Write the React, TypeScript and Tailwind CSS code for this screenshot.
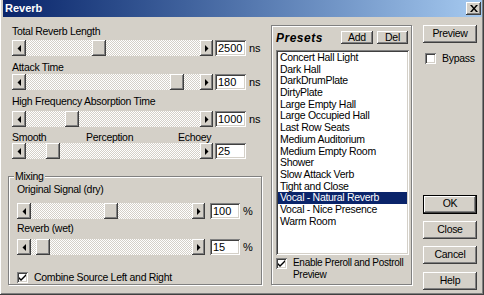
import React from 'react';

const raised =
  'bg-[#d4d0c8] shadow-[inset_-1px_-1px_#404040,inset_1px_1px_#ffffff,inset_-2px_-2px_#808080,inset_2px_2px_#d4d0c8]';
const sunken =
  'bg-white shadow-[inset_1px_1px_#808080,inset_-1px_-1px_#ffffff,inset_2px_2px_#404040,inset_-2px_-2px_#d4d0c8]';
const dither =
  'bg-[repeating-conic-gradient(#ffffff_0_25%,#d4d0c8_0_50%)] bg-[length:2px_2px]';
const plain = 'text-[11px] tracking-normal';

const Arrow = ({ dir }: { dir: 'left' | 'right' }) => (
  <svg width="4" height="7" viewBox="0 0 4 7">
    {dir === 'left' ? <path d="M4 0V7L0.5 3.5Z" fill="#000" /> : <path d="M0 0V7L3.5 3.5Z" fill="#000" />}
  </svg>
);

interface SliderProps {
  track: number;
  thumb: number;
  value: string;
  unit: string;
  gap: string;
  editW: string;
}

const Slider: React.FC<SliderProps> = ({ track, thumb, value, unit, gap, editW }) => (
  <div className="flex items-center h-[16px]">
    <div className={`${raised} w-[14px] h-[16px] flex items-center justify-center`}>
      <Arrow dir="left" />
    </div>
    <div className={`${dither} h-[16px] flex items-center`} style={{ width: track }}>
      <div className={`${raised} w-[14px] h-[16px]`} style={{ marginLeft: thumb }} />
    </div>
    <div className={`${raised} w-[13px] h-[16px] flex items-center justify-center`}>
      <Arrow dir="right" />
    </div>
    <div className={`${sunken} ${gap} ${editW} ${plain} h-[16px] flex items-center pl-[3px] text-black`}>
      {value}
    </div>
    <span className={`${plain} ml-[3px] text-black`}>{unit}</span>
  </div>
);

const Check = ({ checked }: { checked: boolean }) => (
  <div className={`${sunken} w-[11px] h-[11px] shrink-0 flex items-center justify-center`}>
    {checked && (
      <svg width="7" height="7" viewBox="0 0 7 7">
        <path d="M0 3L2 5L7 0V2L2 7L0 5Z" fill="#000" />
      </svg>
    )}
  </div>
);

const Button = ({ label, className = '' }: { label: string; className?: string }) => (
  <div className={`${raised} flex items-center justify-center text-black ${className}`}>{label}</div>
);

const presets = [
  'Concert Hall Light',
  'Dark Hall',
  'DarkDrumPlate',
  'DirtyPlate',
  'Large Empty Hall',
  'Large Occupied Hall',
  'Last Row Seats',
  'Medium Auditorium',
  'Medium Empty Room',
  'Shower',
  'Slow Attack Verb',
  'Tight and Close',
  'Vocal - Natural Reverb',
  'Vocal - Nice Presence',
  'Warm Room',
];

export default function App() {
  return (
    <div className="w-[484px] h-[295px] bg-[#d4d0c8] pl-[3px] pr-[2px] pb-[3px] flex flex-col overflow-hidden font-['Liberation_Sans',Arial,sans-serif] text-[10.5px] tracking-[-0.3px] text-black shadow-[inset_-1px_-1px_#404040,inset_1px_0_#ffffff,inset_-2px_-2px_#808080]">
      {/* title bar */}
      <div className="h-[17px] shrink-0 flex items-center justify-between bg-gradient-to-r from-[#0a246a] to-[#a6caf0] pl-[2px] pr-[1px]">
        <span className={`${plain} text-white font-bold`}>Reverb</span>
        <div className={`${raised} w-[15px] h-[13px] flex items-center justify-center`}>
          <svg width="8" height="7" viewBox="0 0 8 7">
            <path d="M0 0H2L4 2.5L6 0H8L5 3.5L8 7H6L4 4.5L2 7H0L3 3.5Z" fill="#000" />
          </svg>
        </div>
      </div>

      <div className="flex flex-1">
        {/* left column */}
        <div className="ml-[5px] w-[254px] flex flex-col">
          <div className="pl-[4px] flex flex-col">
            <div className="mt-[8px] h-[12px] leading-[12px]">Total Reverb Length</div>
            <div className="mt-[3px]">
              <Slider track={174} thumb={66} value="2500" unit="ns" gap="ml-[2px]" editW="w-[31px]" />
            </div>
            <div className="mt-[5px] h-[12px] leading-[12px]">Attack Time</div>
            <div className="mt-[1px]">
              <Slider track={174} thumb={144} value="180" unit="ns" gap="ml-[2px]" editW="w-[31px]" />
            </div>
            <div className="mt-[5px] h-[12px] leading-[12px]">High Frequency Absorption Time</div>
            <div className="mt-[4px]">
              <Slider track={174} thumb={39} value="1000" unit="ns" gap="ml-[2px]" editW="w-[31px]" />
            </div>
            <div className="mt-[4px] h-[12px] leading-[12px] flex">
              <span className="w-[74px]">Smooth</span>
              <span className="w-[92px]">Perception</span>
              <span>Echoey</span>
            </div>
            <div>
              <Slider track={174} thumb={20} value="25" unit="" gap="ml-[2px]" editW="w-[31px]" />
            </div>
          </div>

          {/* mixing group */}
          <div className="relative mt-[17px] h-[109px] border border-[#808080] shadow-[1px_1px_#ffffff,inset_1px_1px_#ffffff] pl-[8px] flex flex-col">
            <span className="absolute -top-[7px] left-[5px] px-[1px] bg-[#d4d0c8] leading-[12px]">Mixing</span>
            <div className="mt-[6px] h-[12px] leading-[12px]">Original Signal (dry)</div>
            <div className="mt-[8px]">
              <Slider track={161} thumb={73} value="100" unit="%" gap="ml-[5px]" editW="w-[30px]" />
            </div>
            <div className="mt-[3px] h-[12px] leading-[12px]">Reverb (wet)</div>
            <div className="mt-[5px]">
              <Slider track={161} thumb={5} value="15" unit="%" gap="ml-[5px]" editW="w-[30px]" />
            </div>
            <div className="mt-[15px] flex items-center gap-[6px]">
              <Check checked />
              <span>Combine Source Left and Right</span>
            </div>
          </div>
        </div>

        {/* presets group */}
        <div className="ml-[9px] mt-[8px] w-[141px] h-[260px] border border-[#808080] shadow-[1px_1px_#ffffff,inset_1px_1px_#ffffff] pl-[4px] pt-[5px] flex flex-col">
          <div className="flex items-center h-[13px]">
            <span className="font-bold italic text-[12px] tracking-[0.5px]">Presets</span>
            <Button label="Add" className="ml-auto w-[32px] h-[13px]" />
            <Button label="Del" className="ml-[4px] mr-[3px] w-[31px] h-[13px]" />
          </div>
          <div className={`${sunken} mt-[6px] w-[133px] h-[205px] p-[2px] flex flex-col`}>
            {presets.map((p) => (
              <div
                key={p}
                className={`h-[11.7px] leading-[11.7px] pl-[2px] whitespace-nowrap ${
                  p === 'Vocal - Natural Reverb' ? 'bg-[#0a246a] text-white' : ''
                }`}
              >
                {p}
              </div>
            ))}
          </div>
          <div className="mt-[3px] flex gap-[6px]">
            <Check checked />
            <span className="leading-[12px] -mt-[1px] text-[10px] whitespace-nowrap">
              Enable Preroll and Postroll
              <br />
              Preview
            </span>
          </div>
        </div>

        {/* right buttons */}
        <div className="ml-[11px] w-[54px] flex flex-col">
          <Button label="Preview" className="mt-[8px] h-[18px]" />
          <div className="mt-[8px] ml-[2px] flex items-center gap-[6px]">
            <Check checked={false} />
            <span>Bypass</span>
          </div>
          <div className="mt-[128px] h-[19px] border border-black">
            <Button label="OK" className="h-full" />
          </div>
          <Button label="Close" className="mt-[7px] h-[18px]" />
          <Button label="Cancel" className="mt-[7px] h-[18px]" />
          <Button label="Help" className="mt-[8px] h-[18px]" />
        </div>
      </div>
    </div>
  );
}
